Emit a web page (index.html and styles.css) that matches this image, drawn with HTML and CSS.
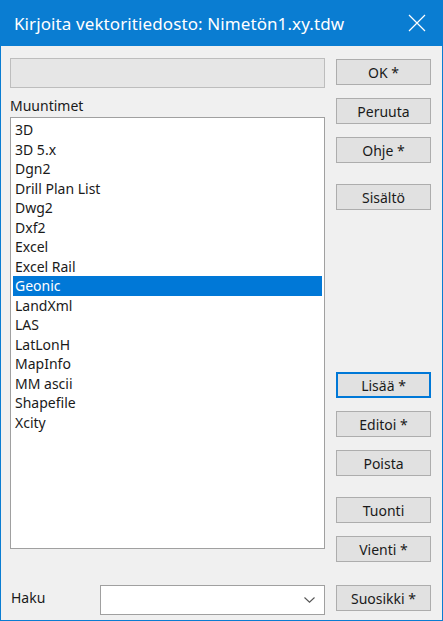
FILE: index.html
```html
<!DOCTYPE html>
<html lang="fi">
  <head>
    <meta charset="UTF-8" />
    <title>Kirjoita vektoritiedosto</title>
    <link rel="stylesheet" href="styles.css">
  </head>
  <body>
    <div class="window">
      <div class="titlebar">
        <span class="title">Kirjoita vektoritiedosto: Nimetön1.xy.tdw</span>
        <svg class="close" width="18" height="18" viewBox="0 0 18 18">
          <path d="M1 1 L17 17 M17 1 L1 17" stroke="#fff" stroke-width="1.2" fill="none" />
        </svg>
      </div>

      <div class="content">
        <div class="left">
          <div class="path-box"></div>
          <label class="list-label">Muuntimet</label>
          <ul class="list">
            <li>3D</li>
            <li>3D 5.x</li>
            <li>Dgn2</li>
            <li>Drill Plan List</li>
            <li>Dwg2</li>
            <li>Dxf2</li>
            <li>Excel</li>
            <li>Excel Rail</li>
            <li class="selected">Geonic</li>
            <li>LandXml</li>
            <li>LAS</li>
            <li>LatLonH</li>
            <li>MapInfo</li>
            <li>MM ascii</li>
            <li>Shapefile</li>
            <li>Xcity</li>
          </ul>
          <div class="search-row">
            <span class="search-label">Haku</span>
            <div class="combo">
              <svg class="chevron" width="11" height="6" viewBox="0 0 11 6">
                <path d="M0.5 0.5 L5.5 5.2 L10.5 0.5" stroke="#555" stroke-width="1.1" fill="none" />
              </svg>
            </div>
          </div>
        </div>

        <div class="buttons">
          <button class="btn">OK *</button>
          <button class="btn">Peruuta</button>
          <button class="btn">Ohje *</button>
          <button class="btn gap-small">Sisältö</button>
          <button class="btn focused gap-big">Lisää *</button>
          <button class="btn">Editoi *</button>
          <button class="btn">Poista</button>
          <button class="btn gap-small">Tuonti</button>
          <button class="btn">Vienti *</button>
          <button class="btn gap-last">Suosikki *</button>
        </div>
      </div>
    </div>
  </body>
</html>
```

FILE: styles.css
```css
:root {
  --accent: #0a7dd2;
  --window-bg: #f0f0f0;
  --btn-bg: #e1e1e1;
  --btn-border: #adadad;
  --text: #1a1a1a;
}

* {
  box-sizing: border-box;
}

body {
  margin: 0;
  font-family: "Noto Sans", "Open Sans", sans-serif;
  color: var(--text);
}

.window {
  width: 443px;
  height: 621px;
  background: var(--window-bg);
  border: 1px solid var(--accent);
  border-top: none;
  overflow: hidden;
}

.titlebar {
  height: 46px;
  margin: 0 -1px;
  background: var(--accent);
  color: #fff;
  display: flex;
  align-items: center;
  justify-content: space-between;
  padding: 0 17px 0 14px;
}

.title {
  font-size: 17px;
  letter-spacing: 0.1px;
}

.close {
  display: block;
}

.content {
  display: flex;
  padding: 12px 0 0 9px;
  gap: 11px;
}

.left {
  width: 315px;
  display: flex;
  flex-direction: column;
}

.path-box {
  height: 30px;
  background: #e6e6e6;
  border: 1px solid #bdbdbd;
}

.list-label {
  font-size: 14px;
  line-height: 18px;
  margin: 9px 0 2px 0;
}

.list {
  list-style: none;
  margin: 0;
  height: 432px;
  background: #fff;
  border: 1px solid #a0a0a0;
  padding: 2px 2px 0 2px;
}

.list li {
  height: 19.5px;
  line-height: 19.5px;
  font-size: 14px;
  padding-left: 2px;
}

.list li.selected {
  background: #0078d7;
  color: #fff;
}

.search-row {
  display: flex;
  align-items: center;
  margin-top: 36px;
}

.search-label {
  width: 90px;
  font-size: 14px;
  padding-left: 1px;
  margin-top: -6px;
}

.combo {
  flex: 1;
  height: 30px;
  background: #fff;
  border: 1px solid #a0a0a0;
  display: flex;
  align-items: center;
  justify-content: flex-end;
  padding-right: 9px;
}

.buttons {
  width: 95px;
  display: flex;
  flex-direction: column;
  padding-top: 1px;
}

.btn {
  height: 26px;
  margin-top: 13px;
  background: var(--btn-bg);
  border: 1px solid var(--btn-border);
  font-family: inherit;
  font-size: 14px;
  color: var(--text);
  padding: 0;
}

.btn:first-child {
  margin-top: 0;
}

.btn.gap-small {
  margin-top: 21px;
}

.btn.gap-last {
  margin-top: 23px;
}

.btn.gap-big {
  margin-top: 162px;
}

.btn.focused {
  border: 2px solid #0078d7;
}
```
